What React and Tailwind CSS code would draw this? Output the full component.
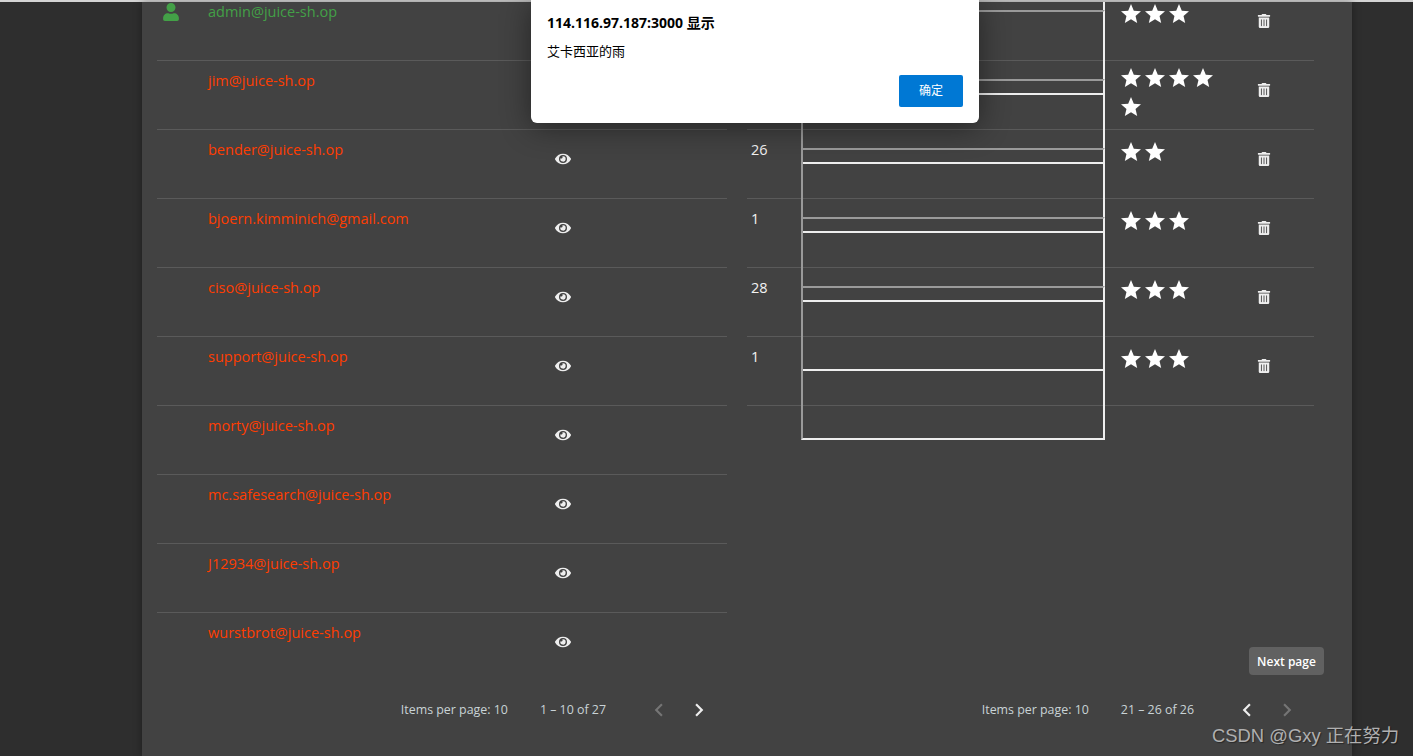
import React from "react";
import { FaEye, FaTrashAlt, FaUser } from "react-icons/fa";

const emails = ["admin@juice-sh.op","jim@juice-sh.op","bender@juice-sh.op","bjoern.kimminich@gmail.com","ciso@juice-sh.op","support@juice-sh.op","morty@juice-sh.op","mc.safesearch@juice-sh.op","J12934@juice-sh.op","wurstbrot@juice-sh.op"];
const feedback = [["",3,true],["",3,true],["",5,true],["26",2,true],["1",3,true],["28",3,true],["1",3,false]];

function Chevron({ d, on }) {
  return (
    <span className={"w-[40px] h-[40px] flex items-center justify-center " + (on ? "text-[#eeeeee]" : "text-[#757575]")}>
      <svg width="26" height="26" viewBox="0 0 24 24" fill="currentColor"><path d={d} /></svg>
    </span>
  );
}

function Pager({ range, prevOn, nextOn }) {
  return (
    <div className="flex items-center justify-end h-[56px] text-[12.4px] text-[#c9d3d6]">
      <span>Items per page: 10</span>
      <span className="ml-[32px] mr-[33px]">{range}</span>
      <Chevron on={prevOn} d="M15.41 7.41L14 6l-6 6 6 6 1.41-1.41L10.83 12z" />
      <Chevron on={nextOn} d="M10 6L8.59 7.41 13.17 12l-4.58 4.59L10 18l6-6z" />
    </div>
  );
}

export default function App() {
  return (
    <div className="relative h-[756px] w-[1413px] overflow-hidden bg-[#2e2e2e] [font-family:'Open_Sans','Noto_Sans_CJK_SC',sans-serif]">
      <div className="h-[2px] bg-[#d4d4d4]" />
      <div className="mx-[142px] w-[1210px] h-[754px] overflow-hidden bg-[#424242] shadow-[0_0_8px_rgba(0,0,0,0.35)] pl-[15px]">
        <div className="flex gap-[20px] -mt-[79px]">
          <div className="w-[570px] flex flex-col">
            <div className="h-[69px] border-b border-[#5a5a5a]" />
            {emails.map((e, i) => (
              <div key={e} className={"h-[69px] flex " + (i < 9 ? "border-b border-[#5a5a5a]" : "")}>
                <div className="w-[51px] pl-[5px] pt-[11px] text-[#43a047]">{i === 0 && <FaUser size={18} />}</div>
                <div className={"w-[347px] pt-[9px] text-[14.5px] leading-[22px] " + (i === 0 ? "text-[#43a047]" : "text-[#ff3d00]")}>{e}</div>
                {i > 0 && <div className="pt-[21px] text-[#eeeeee]"><FaEye size={16} /></div>}
              </div>
            ))}
            <div className="pr-[8px]"><Pager range="1 – 10 of 27" prevOn={false} nextOn={true} /></div>
          </div>
          <div className="w-[567px] flex flex-col">
            {feedback.map(([n, s, frame], i) => (
              <div key={i} className="h-[69px] flex border-b border-[#5a5a5a]">
                <div className="w-[55px] pl-[4px] pt-[9px] text-[14.5px] leading-[22px] text-[#f2f2f2]">{n}</div>
                <div className="w-[317px] relative">
                  {frame && <div className="absolute top-[18px] -left-px w-[304px] h-[154px] border-2 border-t-[#9a9a9a] border-l-[#9a9a9a] border-r-[#eeeeee] border-b-[#eeeeee]" />}
                </div>
                <div className={"w-[138px] " + (s > 4 ? "pt-[5px]" : "pt-[10px]")}>
                  <div className="w-[100px] flex flex-wrap content-start gap-y-[5px] text-white">
                    {Array.from({ length: s }).map((_, k) => (
                      <svg key={k} width="24" height="24" viewBox="0 0 24 24" fill="currentColor"><path d="M12 17.27L18.18 21l-1.64-7.03L22 9.24l-7.19-.61L12 2 9.19 8.63 2 9.24l5.46 4.73L5.82 21z" /></svg>
                    ))}
                  </div>
                </div>
                <div className="pt-[22px] text-[#eeeeee]"><FaTrashAlt size={14} /></div>
              </div>
            ))}
            <div className="mt-auto pr-[7px]"><Pager range="21 – 26 of 26" prevOn={true} nextOn={false} /></div>
          </div>
        </div>
      </div>

      <div className="absolute left-[531px] top-0 w-[448px] h-[123px] bg-white rounded-b-[6px] shadow-[0_4px_30px_rgba(0,0,0,0.45)] px-[16px] pt-[14px] text-black">
        <div className="text-[14px] font-bold leading-[18px]">114.116.97.187:3000 显示</div>
        <div className="mt-[10px] text-[13px] leading-[18px]">艾卡西亚的雨</div>
        <div className="flex justify-end mt-[15px]">
          <div className="w-[64px] h-[32px] bg-[#0078d4] rounded-[2px] text-white text-[12px] flex items-center justify-center">确定</div>
        </div>
      </div>

      <div className="absolute left-[1249px] top-[647px] w-[75px] h-[28px] pt-px rounded-[4px] bg-[#616161] text-white text-[12px] font-semibold flex items-center justify-center">Next page</div>
      <div className="absolute left-[1212px] top-[722px] text-[18.4px] leading-[28px] text-[#b0b0b0] [text-shadow:1px_1px_1px_rgba(0,0,0,0.4)] [font-family:'Liberation_Sans','Noto_Sans_CJK_SC',sans-serif]">CSDN @Gxy 正在努力</div>
    </div>
  );
}
